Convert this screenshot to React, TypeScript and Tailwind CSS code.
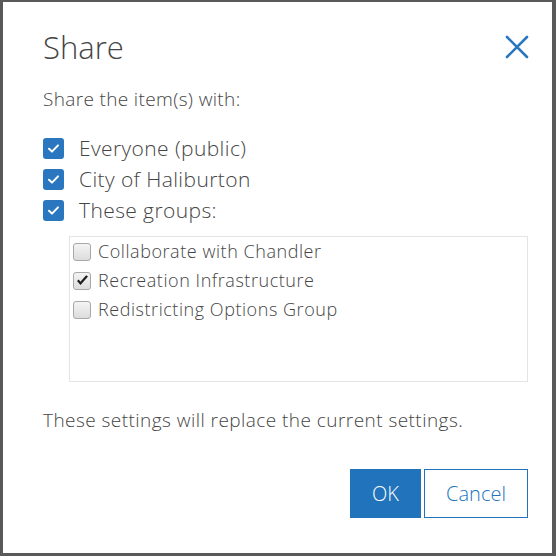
import React from 'react';

const groups = [
  { name: 'Collaborate with Chandler', checked: false },
  { name: 'Recreation Infrastructure', checked: true },
  { name: 'Redistricting Options Group', checked: false },
];

const audiences = ['Everyone (public)', 'City of Haliburton', 'These groups:'];

function BlueCheck() {
  return (
    <span className="flex h-[21px] w-[21px] items-center justify-center rounded-[3px] bg-[#2a77c0]">
      <svg width="13" height="13" viewBox="0 0 13 13" fill="none">
        <path d="M2 6.8 L5 9.6 L11 3.4" stroke="white" strokeWidth="2" strokeLinecap="round" strokeLinejoin="round" />
      </svg>
    </span>
  );
}

function GrayBox({ checked }: { checked: boolean }) {
  return (
    <span className="flex h-[18px] w-[18px] items-center justify-center rounded-[3px] border border-[#a8a8a8] bg-gradient-to-b from-[#f4f4f4] to-[#dcdcdc]">
      {checked ? (
        <svg width="13" height="13" viewBox="0 0 13 13">
          <path d="M1 7 L4.5 11 L12 2.6 L10.2 1.2 L4.4 7.8 L2.8 5.6 Z" fill="#1c1c1c" />
        </svg>
      ) : null}
    </span>
  );
}

export default function App() {
  return (
    <div
      className="h-[556px] w-[556px] border-b-[3px] border-l-[3px] border-r-4 border-t-2 border-[#595959] bg-white text-[#454545]"
      style={{ fontFamily: '"Open Sans", Lato, sans-serif' }}
    >
      <div className="flex flex-col pl-10 pr-6">
        {/* Header */}
        <div className="flex items-center justify-between pt-[27px]">
          <h1 className="text-[31px] font-light leading-[36px]">Share</h1>
          <button className="-mr-[2px] -mt-[1px] text-[#2a77c0]">
            <svg width="26" height="26" viewBox="0 0 26 26">
              <path d="M3 3 L23 23 M23 3 L3 23" stroke="currentColor" strokeWidth="2.6" strokeLinecap="round" />
            </svg>
          </button>
        </div>

        <p className="mt-[22px] text-[19px] font-light leading-[24px] tracking-[0.35px]">Share the item(s) with:</p>

        {/* Audience */}
        <div className="mt-[22px] flex flex-col">
          {audiences.map((a) => (
            <label key={a} className="flex h-[31px] items-center gap-[15px]">
              <BlueCheck />
              <span className="text-[21px] font-light leading-[31px] tracking-[0.4px]">{a}</span>
            </label>
          ))}
        </div>

        {/* Groups list */}
        <div className="ml-[26px] mt-[10px] h-[146px] border border-[#e4e4e4] pl-[3px]">
          {groups.map((g) => (
            <label key={g.name} className="flex h-[29px] items-center gap-[7px]">
              <GrayBox checked={g.checked} />
              <span className="text-[18px] font-light leading-[29px] tracking-[0.55px]">{g.name}</span>
            </label>
          ))}
        </div>

        <p className="mt-[26px] text-[19px] font-light leading-[24px] tracking-[0.45px]">
          These settings will replace the current settings.
        </p>

        {/* Footer */}
        <div className="mt-[37px] flex justify-end gap-[3px]">
          <button className="h-[49px] w-[71px] bg-[#2174bb] text-[20px] font-light text-white">OK</button>
          <button className="h-[49px] w-[104px] border border-[#2174bb] bg-white text-[20px] font-light text-[#2174bb]">
            Cancel
          </button>
        </div>
      </div>
    </div>
  );
}
